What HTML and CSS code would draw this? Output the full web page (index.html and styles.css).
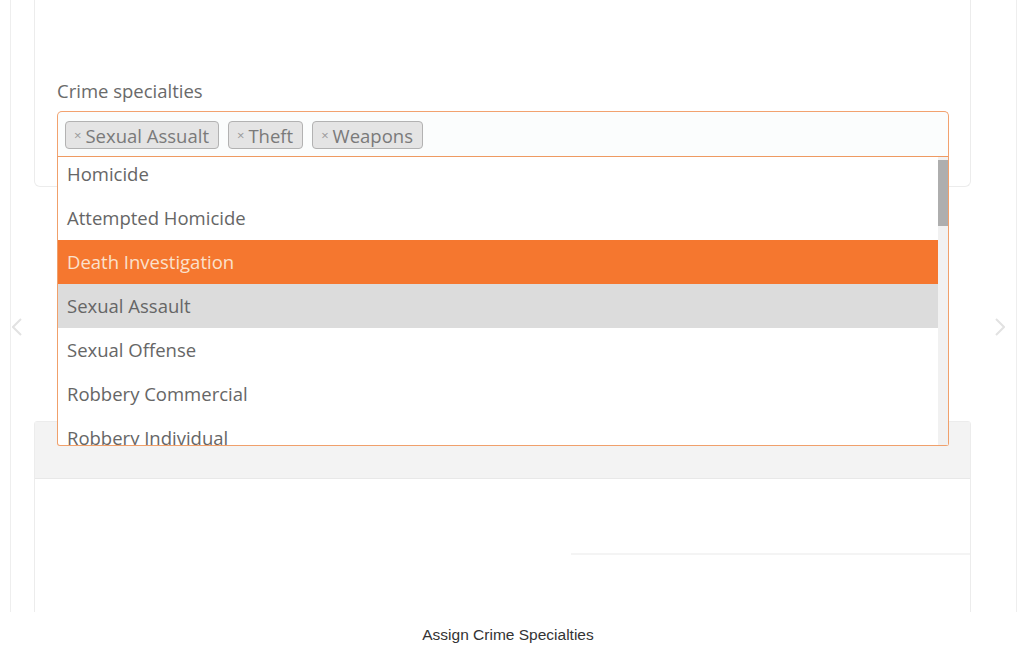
FILE: index.html
```html
<!DOCTYPE html>
<html lang="en">
<head>
    <meta charset="UTF-8">
    <meta name="viewport" content="width=device-width, initial-scale=1.0">
    <title>Assign Crime Specialties</title>
    <link rel="stylesheet" href="styles.css">
</head>
<body>
    <div class="frame">
        <!-- carousel arrows -->
        <span class="arrow arrow-left">
            <svg width="10" height="18" viewBox="0 0 10 18"><path d="M9 1 L1 9 L9 17" fill="none" stroke="#e2e2e2" stroke-width="2"/></svg>
        </span>
        <span class="arrow arrow-right">
            <svg width="10" height="18" viewBox="0 0 10 18"><path d="M1 1 L9 9 L1 17" fill="none" stroke="#e2e2e2" stroke-width="2"/></svg>
        </span>

        <div class="slide">
            <!-- form card -->
            <div class="card card-form">
                <label class="field-label">Crime specialties</label>
                <div class="select-wrap">
                    <div class="select">
                        <span class="tag"><span class="tag-x">×</span>Sexual Assualt</span>
                        <span class="tag"><span class="tag-x">×</span>Theft</span>
                        <span class="tag"><span class="tag-x">×</span>Weapons</span>
                    </div>
                    <div class="dropdown">
                        <div class="options">
                            <ul class="option-list">
                                <li class="option">Homicide</li>
                                <li class="option">Attempted Homicide</li>
                                <li class="option highlighted">Death Investigation</li>
                                <li class="option selected">Sexual Assault</li>
                                <li class="option">Sexual Offense</li>
                                <li class="option">Robbery Commercial</li>
                                <li class="option">Robbery Individual</li>
                            </ul>
                        </div>
                        <div class="scrollbar">
                            <div class="scroll-thumb"></div>
                        </div>
                    </div>
                </div>
            </div>

            <!-- table card -->
            <div class="card card-table">
                <div class="card-header"></div>
                <div class="card-body">
                    <div class="faint-row"></div>
                </div>
            </div>
        </div>
    </div>

    <p class="caption">Assign Crime Specialties</p>
</body>
</html>
```

FILE: styles.css
```css
body {
    margin: 0;
    background: #fff;
    font-family: 'Open Sans', 'Noto Sans', sans-serif;
    color: #666;
}
.frame {
    position: relative;
    height: 612px;
    margin-left: 10px;
    width: 1005px;
    border-left: 1px solid #eee;
    border-right: 1px solid #eee;
    overflow: hidden;
}
.arrow {
    position: absolute;
    top: 318px;
    line-height: 0;
}
.arrow-left {
    left: 1px;
}
.arrow-right {
    right: 11px;
}
.slide {
    padding-left: 23px;
    width: 937px;
}
.card {
    border: 1px solid #ececec;
    background: #fff;
    box-sizing: border-box;
}
.card-form {
    border-top: none;
    border-radius: 0 0 6px 6px;
    height: 187px;
    padding: 78px 22px 0 22px;
}
.field-label {
    display: block;
    font-size: 18.5px;
    line-height: 25px;
    color: #6a6a6a;
    margin-bottom: 8px;
}
.select-wrap {
    position: relative;
    width: 892px;
    z-index: 2;
}
.select {
    display: flex;
    gap: 9px;
    height: 46px;
    box-sizing: border-box;
    padding: 9px 7px;
    border: 1px solid #f2a26f;
    border-bottom-color: #ee9a62;
    border-radius: 5px 5px 0 0;
    background: #fbfdfd;
}
.tag {
    display: flex;
    align-items: center;
    height: 28px;
    box-sizing: border-box;
    padding: 0 9px 0 8px;
    background: #e4e4e4;
    border: 1px solid #b2b2b2;
    border-radius: 4px;
    font-size: 18.5px;
    color: #7a7a7a;
}
.tag-x {
    font-size: 13px;
    color: #999;
    margin-right: 4px;
}
.dropdown {
    position: absolute;
    top: 100%;
    left: 0;
    right: 0;
    height: 289px;
    display: flex;
    border: 1px solid #f0a06b;
    border-top: none;
    border-radius: 0 0 3px 3px;
    background: #fff;
    box-sizing: border-box;
}
.options {
    flex: 1;
    overflow: hidden;
}
.option-list {
    list-style: none;
    margin: -5px 0 0 0;
    padding: 0;
}
.option {
    height: 44px;
    line-height: 44px;
    padding-left: 9px;
    font-size: 18.5px;
    color: #666;
}
.option.highlighted {
    background: #f5772f;
    color: #fbe1cc;
}
.option.selected {
    background: #dcdcdc;
    color: #666;
}
.scrollbar {
    width: 10px;
    background: #f1f1f1;
    padding-top: 3px;
}
.scroll-thumb {
    height: 66px;
    background: #aeaeae;
}
.card-table {
    margin-top: 234px;
    height: 200px;
    border-radius: 3px 3px 0 0;
}
.card-header {
    height: 56px;
    background: #f3f3f3;
    border-bottom: 1px solid #e8e8e8;
}
.card-body {
    padding-top: 74px;
}
.faint-row {
    margin-left: 536px;
    height: 2px;
    background: #f4f4f4;
}
.caption {
    margin: 0;
    padding: 14px 8px 0 0;
    text-align: center;
    font-family: 'Liberation Sans', Arial, sans-serif;
    font-size: 15.5px;
    color: #333;
}
```
